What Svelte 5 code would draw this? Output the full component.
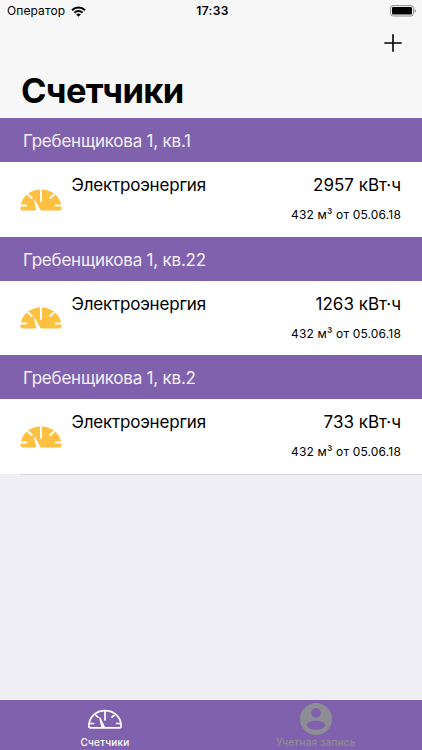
<script lang="ts">
	type Meter = { address: string; name: string; value: string; last: string };

	const meters: Meter[] = [
		{
			address: 'Гребенщикова 1, кв.1',
			name: 'Электроэнергия',
			value: '2957 кВт·ч',
			last: '432 м³ от 05.06.18'
		},
		{
			address: 'Гребенщикова 1, кв.22',
			name: 'Электроэнергия',
			value: '1263 кВт·ч',
			last: '432 м³ от 05.06.18'
		},
		{
			address: 'Гребенщикова 1, кв.2',
			name: 'Электроэнергия',
			value: '733 кВт·ч',
			last: '432 м³ от 05.06.18'
		}
	];

	let tab = $state('meters');
</script>

<div class="screen">
	<header>
		<div class="status">
			<div class="carrier">
				<span>Оператор</span>
				<svg width="15" height="11" viewBox="0 0 15 11">
					<g fill="none" stroke="#000" stroke-width="2">
						<path d="M1 4.2a9.2 9.2 0 0 1 13 0" />
						<path d="M3.5 6.7a5.7 5.7 0 0 1 8 0" />
					</g>
					<path d="M7.5 10.8 5.2 8.5a3.3 3.3 0 0 1 4.6 0z" />
				</svg>
			</div>
			<time>17:33</time>
			<svg class="battery" width="27" height="12" viewBox="0 0 27 12">
				<rect x=".6" y=".6" width="22.8" height="10.4" rx="2.4" fill="none" stroke="#8c8c8e" />
				<rect x="2" y="2" width="20" height="7.6" rx="1" />
				<path d="M24.6 4v3.8q1.4-.5 1.4-1.9t-1.4-1.9z" fill="#8c8c8e" />
			</svg>
		</div>
		<div class="actions">
			<button aria-label="Добавить">
				<svg width="18" height="18" viewBox="0 0 18 18">
					<path d="M9 .3v17.4M.3 9h17.4" stroke="#000" stroke-width="1.6" />
				</svg>
			</button>
		</div>
		<h1>Счетчики</h1>
	</header>

	<main>
		{#each meters as meter (meter.address)}
			<h2>{meter.address}</h2>
			<div class="row">
				<svg class="gauge" width="42" height="22" viewBox="0 0 42 22">
					<path
						d="M.5 19.500C.5 8.500 9.500.5 21 .5s20.500 8 20.500 19q0 2-2 2h-37q-2 0-2-2z"
						fill="#fdc040"
					/>
					<path
						d="M21 0v12M8.200 5.700l3.600 3.300M33.800 5.700l-3.600 3.300M0 16.400h6.200M42 16.400h-6.200"
						stroke="#fff"
						stroke-width="2"
						stroke-linecap="round"
					/>
					<path d="M14 11.300q.8-.6 1.200.2L21 22h-4.800z" fill="#fff" />
				</svg>
				<span class="name">{meter.name}</span>
				<div class="reading">
					<span class="value">{meter.value}</span>
					<span class="last">{meter.last}</span>
				</div>
			</div>
		{/each}
		<div class="end"></div>
	</main>

	<nav>
		<button class="tab" class:active={tab === 'meters'} onclick={() => (tab = 'meters')}>
			<svg width="36" height="32" viewBox="0 0 36 32">
				<g fill="none" stroke="currentColor" stroke-width="1.7" stroke-linecap="round">
					<path
						d="M3.500 24.800C1.800 24.800 1.800 23.500 1.800 22.500 2.300 14 9 7.700 18 7.700s15.700 6.300 16.200 14.800c0 1 0 2.300-1.700 2.300z"
					/>
					<path d="M18 8v9M9 12.300l2 1.900M27 12.300l-2 1.900M3 20.500h3.500M33 20.500h-3.500" />
				</g>
				<path d="M12 14.600q.9-.8 1.500.2L18.400 24.800h-4z" fill="currentColor" />
			</svg>
			<span>Счетчики</span>
		</button>
		<button class="tab" class:active={tab === 'account'} onclick={() => (tab = 'account')}>
			<svg width="34" height="34" viewBox="0 0 34 34">
				<path
					fill="currentColor"
					fill-rule="evenodd"
					d="M17 1a16 16 0 1 0 0 32a16 16 0 1 0 0-32zm0 5a4.800 4.800 0 1 1 0 9.600a4.800 4.800 0 1 1 0-9.600zm0 12.800c4.800 0 9.500 1.700 9.500 4.600-2 3-5.500 4.400-9.500 4.400s-7.500-1.400-9.500-4.400c0-2.900 4.700-4.600 9.500-4.600z"
				/>
			</svg>
			<span>Учетная запись</span>
		</button>
	</nav>
</div>

<style>
	:global(body) {
		background: #efeef4;
	}
	.screen {
		display: flex;
		flex-direction: column;
		height: 750px;
		overflow: hidden;
		background: #efeef4;
		color: #000;
		font-family: Inter, Roboto, sans-serif;
	}
	button {
		padding: 0;
		border: 0;
		background: none;
		font: inherit;
		cursor: pointer;
	}
	svg {
		display: block;
		flex: none;
	}
	h1,
	h2 {
		margin: 0;
	}
	header {
		box-sizing: border-box;
		height: 118.3px;
		background: #f7f7f8;
	}
	.status {
		display: grid;
		grid-template-columns: 1fr auto 1fr;
		align-items: center;
		height: 22px;
		padding: 0 5px 0 7px;
		font-size: 12px;
		line-height: 22px;
	}
	.carrier {
		display: flex;
		align-items: center;
		gap: 6px;
		letter-spacing: 0.1px;
	}
	time {
		padding-left: 1px;
		font-weight: 600;
		letter-spacing: 0.4px;
	}
	.battery {
		justify-self: end;
	}
	.actions {
		display: flex;
		justify-content: flex-end;
		align-items: center;
		height: 42px;
		padding-right: 20px;
	}
	h1 {
		padding-left: 21px;
		font-size: 34.5px;
		font-weight: 700;
		letter-spacing: -0.65px;
		line-height: 53px;
	}
	h2 {
		height: 44px;
		padding-left: 23px;
		background: #7f61ad;
		color: #f5f0fb;
		font-size: 17px;
		font-weight: 400;
		letter-spacing: -0.22px;
		line-height: 47px;
	}
	.row {
		display: flex;
		height: 74.5px;
		padding: 0 21px 0 20px;
		background: #fff;
	}
	.end {
		height: 1px;
		margin-left: 20px;
		background: #d9d8dd;
	}
	.gauge {
		margin: 26.5px 9.5px 0 0;
	}
	.name {
		padding-top: 11px;
		font-size: 17px;
		letter-spacing: -0.2px;
		line-height: 24px;
	}
	.reading {
		display: flex;
		flex: 1;
		flex-direction: column;
		align-items: flex-end;
		padding-top: 11px;
	}
	.value {
		font-size: 17px;
		line-height: 24px;
	}
	.last {
		padding-top: 8px;
		font-size: 12px;
		letter-spacing: 0.16px;
		line-height: 20px;
	}
	nav {
		display: flex;
		height: 50.5px;
		margin-top: auto;
		background: #7f61ad;
	}
	.tab {
		display: flex;
		flex: 1;
		flex-direction: column;
		align-items: center;
		justify-content: flex-start;
		padding: 2px 1px 0 0;
		color: #8e8d95;
		font-size: 10px;
		font-weight: 500;
		letter-spacing: 0.22px;
		line-height: 13px;
	}
	.tab.active {
		color: #fff;
	}
	.tab svg {
		height: 34px;
	}
</style>
